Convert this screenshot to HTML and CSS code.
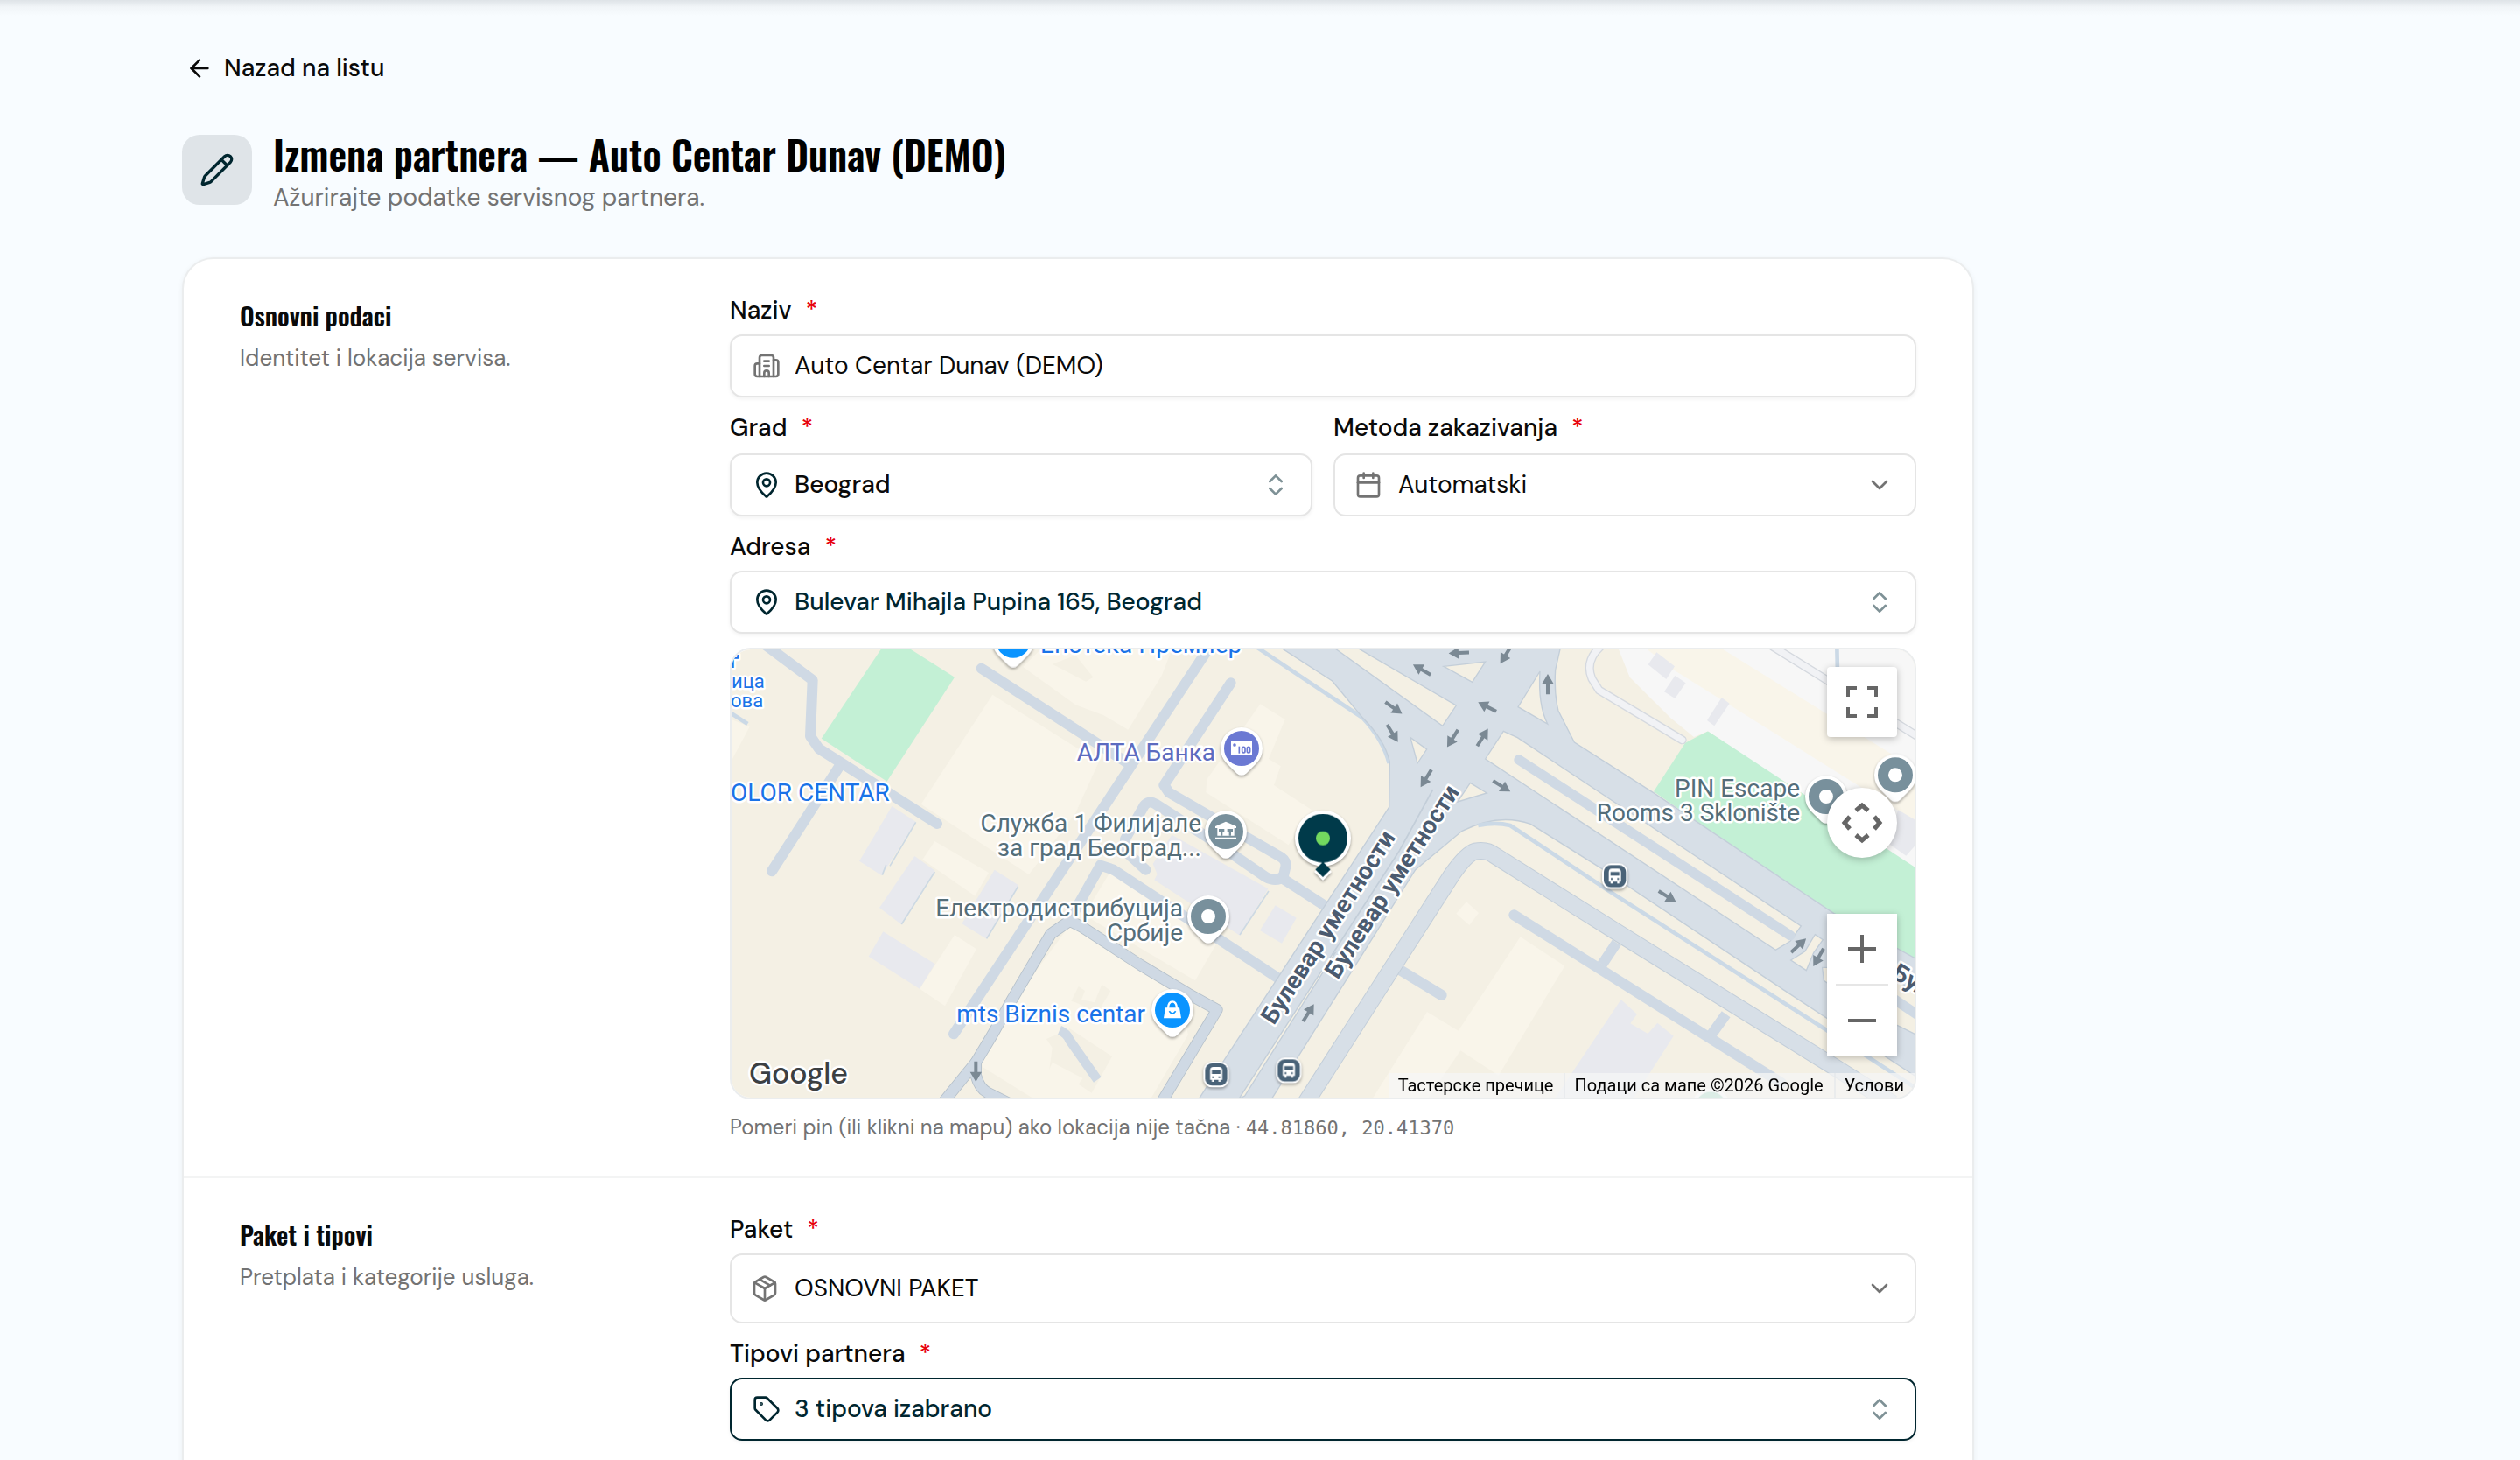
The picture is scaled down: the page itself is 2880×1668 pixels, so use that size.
FILE: index.html
```html
<!DOCTYPE html>
<html lang="sr">
<head>
  <meta charset="utf-8">
  <meta name="viewport" content="width=device-width, initial-scale=1">
  <title>Izmena partnera</title>
  <link rel="stylesheet" href="styles.css">
</head>
<body>
  <main class="page">
    <a class="back" href="#">
      <svg class="icon" viewBox="0 0 24 24" aria-hidden="true"><path d="m12 19-7-7 7-7"/><path d="M19 12H5"/></svg>
      Nazad na listu
    </a>

    <header class="page-head">
      <span class="page-tile">
        <svg class="icon icon-lg" viewBox="0 0 24 24" aria-hidden="true"><path d="M21.174 6.812a1 1 0 0 0-3.986-3.987L3.842 16.174a2 2 0 0 0-.5.83l-1.321 4.352a.5.5 0 0 0 .623.622l4.353-1.32a2 2 0 0 0 .83-.497z"/><path d="m15 5 4 4"/></svg>
      </span>
      <div>
        <h1 class="page-title">Izmena partnera — Auto Centar Dunav (DEMO)</h1>
        <p class="page-subtitle">Ažurirajte podatke servisnog partnera.</p>
      </div>
    </header>

    <form class="card">
      <section class="section">
        <div class="section-info">
          <h2 class="section-title">Osnovni podaci</h2>
          <p class="section-text">Identitet i lokacija servisa.</p>
        </div>
        <div class="fields">
          <div class="field">
            <label class="label" for="naziv">Naziv <span class="required">*</span></label>
            <div class="control">
              <svg class="icon muted" viewBox="0 0 24 24" aria-hidden="true"><path d="M10 12h4"/><path d="M10 8h4"/><path d="M14 21v-3a2 2 0 0 0-4 0v3"/><path d="M6 10H4a2 2 0 0 0-2 2v7a2 2 0 0 0 2 2h16a2 2 0 0 0 2-2V9a2 2 0 0 0-2-2h-2"/><path d="M6 21V5a2 2 0 0 1 2-2h8a2 2 0 0 1 2 2v16"/></svg>
              <input class="value" id="naziv" type="text" value="Auto Centar Dunav (DEMO)">
            </div>
          </div>

          <div class="field-row">
            <div class="field">
              <label class="label" for="grad">Grad <span class="required">*</span></label>
              <button class="control combo" id="grad" type="button">
                <svg class="icon brand" viewBox="0 0 24 24" aria-hidden="true"><path d="M20 10c0 4.993-5.539 10.193-7.399 11.799a1 1 0 0 1-1.202 0C9.539 20.193 4 14.993 4 10a8 8 0 0 1 16 0"/><circle cx="12" cy="10" r="3"/></svg>
                <span class="value">Beograd</span>
                <svg class="icon brand faded" viewBox="0 0 24 24" aria-hidden="true"><path d="m7 15 5 5 5-5"/><path d="m7 9 5-5 5 5"/></svg>
              </button>
            </div>
            <div class="field">
              <label class="label" for="metoda">Metoda zakazivanja <span class="required">*</span></label>
              <div class="control dropdown">
                <svg class="icon muted" viewBox="0 0 24 24" aria-hidden="true"><path d="M8 2v4"/><path d="M16 2v4"/><rect width="18" height="18" x="3" y="4" rx="2"/><path d="M3 10h18"/></svg>
                <select class="value" id="metoda"><option>Automatski</option></select>
                <svg class="icon muted" viewBox="0 0 24 24" aria-hidden="true"><path d="m6 9 6 6 6-6"/></svg>
              </div>
            </div>
          </div>

          <div class="field">
            <label class="label" for="adresa">Adresa <span class="required">*</span></label>
            <button class="control combo brand" id="adresa" type="button">
              <svg class="icon" viewBox="0 0 24 24" aria-hidden="true"><path d="M20 10c0 4.993-5.539 10.193-7.399 11.799a1 1 0 0 1-1.202 0C9.539 20.193 4 14.993 4 10a8 8 0 0 1 16 0"/><circle cx="12" cy="10" r="3"/></svg>
              <span class="value">Bulevar Mihajla Pupina 165, Beograd</span>
              <svg class="icon faded" viewBox="0 0 24 24" aria-hidden="true"><path d="m7 15 5 5 5-5"/><path d="m7 9 5-5 5 5"/></svg>
            </button>
          </div>

          <div class="map">
            <svg class="map-canvas" viewBox="0 0 1352 512" preserveAspectRatio="xMidYMid slice" role="img" aria-label="Mapa lokacije">
              <defs>
                <path id="arrow" d="M0-36 20-2H6V34H-6V-2H-20Z"/>
                <path id="pin" d="M-51 51A72 72 0 1 1 51 51L16 86Q0 99-16 86Z"/>
                <g id="bus">
                  <rect x="-44" y="-44" width="88" height="88" rx="30" fill="#fff"/>
                  <rect x="-38" y="-38" width="76" height="76" rx="24" fill="#4a6378"/>
                  <path fill="#fff" d="M-21-14Q-21-26-10-26H10Q21-26 21-14V18H15V25H8V18H-8V25H-15V18H-21Z"/>
                  <path fill="#4a6378" d="M-15-15H15V-2H-15ZM-14 6h6v6h-6ZM8 6h6v6H8Z"/>
                </g>
              </defs>
              <rect width="1352" height="512" fill="#f4f0e4"/>

              <g transform="scale(.33333)">
                <!-- parks and pale blocks -->
                <g fill="#c3f0d5">
                  <path d="M512 0H615L765 95 533 452 308 305Z"/>
                  <path d="M3348 280 3270 320 3162 487 3780 915 4060 1075V745L3600 440Z"/>
                </g>
                <path fill="#f7f7f7" d="M3042 0 3080 95 3220 235 3300 300 3348 280 4060 748V0Z"/>
                <path fill="#f9f5ea" d="M3140 0H3400L4060 410V590L3230 70Z"/>

                <!-- buildings -->
                <g fill="#f9f5ea">
                  <path d="M895 155 1260 385 1180 560 1020 772 650 530Z"/>
                  <path d="M697 657 882 765 835 845 655 720Z"/>
                  <path d="M765 978 840 1027 732 1222 645 1163Z"/>
                  <path d="M0 240 62 265 0 380Z"/>
                  <path d="M1000 60 1060 0H1510L1475 90 1360 275 1275 225 1180 190Z"/>
                  <path d="M1300 760 1665 1005 1590 1135 1210 910Z"/>
                  <path d="M1160 945 1520 1150 1566 1320 1440 1536H1030L860 1430V1370L980 1190Z"/>
                  <path d="M1813 187 1898 240 1842 375 1883 400 1860 465 1990 550 1910 670 1627 490 1630 445Z"/>
                  <path d="M2705 985 2857 1085 2630 1460 2500 1375 2490 1310Z"/>
                  <path d="M2385 1242 2500 1312V1375L2390 1536H2200Z"/>
                  <path d="M2520 865 2562 903 2530 945 2485 905Z"/>
                </g>
                <g fill="#f4f0e4">
                  <path d="M1190 1155 1212 1170 1200 1200 1245 1210 1270 1148 1300 1170 1255 1245 1180 1210 1165 1205Z"/>
                  <path d="M1160 1300 1305 1395 1235 1520 1190 1490 1205 1470 1100 1415 1090 1440 1100 1365 1080 1335Z"/>
                  <path d="M1180 20 1240 95 1215 110 1100 50Z"/>
                </g>
                <g fill="#e8e9ee">
                  <path d="M550 537 632 590 515 775 438 725Z"/>
                  <path d="M628 708 698 758 583 943 507 885Z"/>
                  <path d="M902 755 984 808 875 992 790 940Z"/>
                  <path d="M520 967 698 1078 645 1163 470 1052Z"/>
                  <path d="M1510 635 1840 820 1743 980 1450 790 1460 770 1445 735Z"/>
                  <path d="M1865 877 1937 920 1887 1007 1812 963Z"/>
                  <path d="M3172 10 3234 58 3205 102 3143 52Z"/>
                  <path d="M3235 90 3272 115 3235 168 3198 145Z"/>
                  <path d="M3395 165 3422 185 3370 262 3345 243Z"/>
                  <path d="M4000 550 4060 585V670L4027 707 3960 660Z"/>
                  <path d="M3050 1200 3105 1250 3082 1282 3142 1317 3175 1280 3230 1325 3095 1536H2825Z"/>
                </g>
                <g fill="none" stroke="#cdd9e3" stroke-width="5">
                  <path d="M632 592 543 742M530 738 517 773M697 762 583 942M983 812 875 991M1842 828 1743 978"/>
                </g>

                <!-- service streets -->
                <g fill="none" stroke="#cfd9e4" stroke-width="36" stroke-linecap="round" stroke-linejoin="round">
                  <path d="M110-20 278 105 270 297 300 340 705 597"/>
                  <path d="M370 400 138 760"/>
                  <path d="M1640-10 762 1318"/>
                  <path d="M857 65 1360 390"/>
                  <path d="M1712 115 1483 465 1500 490 1885 712Q1904 725 1900 745L1893 775Q1870 800 1832 780L1650 655 1455 530Q1430 515 1415 535L1350 650V690L1420 755"/>
                  <path d="M1890 785 2060 895"/>
                  <path d="M1175 900 1265 740 1310 755 1880 1130"/>
                  <path d="M1125 1305Q1150 1315 1160 1340L1255 1475" stroke-width="32" stroke-linecap="butt"/>
                  <path d="M2270 1085 2435 1185"/>
                  <path d="M2683 910 3600 1486"/>
                  <path d="M3035 1005 2985 1080M3410 1250 3360 1320" stroke-linecap="butt"/>
                </g>
                <g fill="none" stroke="#b5c0ca" stroke-width="40" stroke-linejoin="round" stroke-linecap="round">
                  <path d="M720 1560 838 1415 895 1320 965 1195 1095 975 1160 930 1200 950 1400 1080 1566 1180 1665 1235 1470 1560"/>
                  <path d="M838 1415V1460Q850 1505 880 1520L960 1560"/>
                </g>
                <g fill="none" stroke="#cfd9e4" stroke-width="35" stroke-linejoin="round" stroke-linecap="round">
                  <path d="M720 1560 838 1415 895 1320 965 1195 1095 975 1160 930 1200 950 1400 1080 1566 1180 1665 1235 1470 1560"/>
                  <path d="M838 1415V1460Q850 1505 880 1520L960 1560"/>
                </g>
                <g fill="none" stroke="#cbd9e6" stroke-width="14">
                  <path d="M1790-15 2165 235Q2235 310 2255 390"/>
                  <path d="M0 220 55 255"/>
                  <path d="M3790-10 3792 80M2510 490 2532 512"/>
                </g>

                <!-- outer carriageway -->
                <g fill="none" stroke-linejoin="round">
                  <path stroke="#c3ced9" stroke-width="60" d="M1965 1560 2468 775Q2520 700 2550 692 2590 685 2615 705L3030 965 3780 1430 3980 1556"/>
                  <path stroke="#d7dfe7" stroke-width="54" d="M1965 1560 2468 775Q2520 700 2550 692 2590 685 2615 705L3030 965 3780 1430 3980 1556"/>
                </g>

                <!-- boulevards and junction -->
                <path fill="#d7dfe7" stroke="#c3ced9" stroke-width="4" d="M1885-5 2060 108 2165 235Q2240 310 2257 385L2255 540 1590 1560H1840L2345 755 2505 622Q2630 560 2740 598L2985 752 3605 1165 4070 1470V1065L3780 905 3160 490 2890 318 2835 210Q2820 150 2825 70L2842-5Z"/>
                <g fill="#f4f0e4" stroke="#c3ced9" stroke-width="4">
                  <path d="M2070-3H2150L2485 192 2438 262Z"/>
                  <path d="M2442 58 2585 42 2540 112Z"/>
                  <path d="M2772 75 2697 197 2798 255Q2765 190 2772 75Z"/>
                  <path d="M2328 302 2384 342 2352 390Z"/>
                  <path d="M2647 280 2695 302 3667 948 3630 1000 3580 1030 2585 375Z"/>
                  <path d="M2533 457 2590 492 2490 522Z"/>
                  <path d="M3715 977 3742 995 3710 1040 3685 1100 3632 1065 3680 1035Z"/>
                  <path d="M3740 1090 3900 1090 4070 1175V1325L3900 1240 3745 1135Z"/>
                  <path d="M2070 1040 1760 1530 1740 1540 2060 1045Z"/>
                </g>
                <path fill="none" stroke="#c3ced9" stroke-width="5" d="M2405 480 2290 690 2060 1045"/>
                <path fill="none" stroke="#cfd9e4" stroke-width="34" stroke-linecap="round" d="M2700 378 3630 980"/>
                <path stroke="#cfd9e4" stroke-width="34" d="M3980 1195 4070 1255"/>
                <path fill="none" stroke="#cbd9e6" stroke-width="14" d="M2560 603Q2620 590 2670 603L3020 835 3755 1305 4070 1510"/>

                <g fill="none" stroke-linecap="round">
                  <path stroke="#d5d9df" stroke-width="30" d="M2980-10Q2925 40 2950 100L2975 140 3260 310M3570-10 4070 300"/>
                  <path stroke="#f1f2f5" stroke-width="22" d="M2980-10Q2925 40 2950 100L2975 140 3260 310M3570-10 4070 300"/>
                </g>

                <!-- traffic direction -->
                <g fill="#7b8994">
                  <use href="#arrow" transform="translate(2799 120)"/>
                  <use href="#arrow" transform="translate(2495 12) rotate(-92)"/>
                  <use href="#arrow" transform="translate(2655 18) rotate(212)"/>
                  <use href="#arrow" transform="translate(2368 70) rotate(-60)"/>
                  <use href="#arrow" transform="translate(2592 197) rotate(-63)"/>
                  <use href="#arrow" transform="translate(2270 200) rotate(125)"/>
                  <use href="#arrow" transform="translate(2266 287) rotate(148)"/>
                  <use href="#arrow" transform="translate(2473 304) rotate(212)"/>
                  <use href="#arrow" transform="translate(2575 302) rotate(32)"/>
                  <use href="#arrow" transform="translate(2382 441) rotate(212)"/>
                  <use href="#arrow" transform="translate(2640 468) rotate(122)"/>
                  <use href="#arrow" transform="translate(1978 1246) rotate(32)"/>
                  <use href="#arrow" transform="translate(3208 846) rotate(122)"/>
                  <use href="#arrow" transform="translate(3658 1015) rotate(47)"/>
                  <use href="#arrow" transform="translate(3727 1055) rotate(210)"/>
                  <use href="#arrow" transform="translate(838 1446) rotate(180)"/>
                </g>
              </g>

              <!-- place names -->
              <g class="map-street">
                <text transform="translate(620 430) rotate(-57)">Булевар уметности</text>
                <text transform="translate(693 378) rotate(-57)">Булевар уметности</text>
                <text transform="translate(1324 374) rotate(32)">Бул</text>
              </g>
              <g class="map-place place-blue">
                <text x="353" y="4">Енотека Премиер</text>
                <text x="-1" y="173">OLOR CENTAR</text>
                <text x="473" y="426" text-anchor="end">mts Biznis centar</text>
              </g>
              <g class="map-place place-small place-blue">
                <text x="-1" y="21">ґ</text>
                <text x="0" y="44">ица</text>
                <text x="-1" y="66">ова</text>
              </g>
              <text class="map-place place-violet" x="553" y="127" text-anchor="end">АЛТА Банка</text>
              <g class="map-place place-slate" text-anchor="end">
                <text x="537" y="208">Служба 1 Филијале</text>
                <text x="537" y="236">за град Београд...</text>
                <text x="516" y="305">Електродистрибуција</text>
                <text x="516" y="333">Србије</text>
                <text x="1221" y="168">PIN Escape</text>
                <text x="1221" y="196">Rooms 3 Sklonište</text>
              </g>
              <text class="map-logo" x="20" y="496">Google</text>

              <!-- markers -->
              <g transform="scale(.33333)">
                <g class="map-pins" fill="#fff">
                  <use href="#pin" x="966" y="-31"/>
                  <use href="#pin" x="1749" y="339"/>
                  <use href="#pin" x="1695" y="624"/>
                  <use href="#pin" x="1635" y="915"/>
                  <use href="#pin" x="1512" y="1236"/>
                  <use href="#pin" x="3753" y="504"/>
                  <use href="#pin" x="3990" y="430"/>
                </g>
                <circle cx="966" cy="-31" r="60" fill="#0a94ff"/>
                <circle cx="1512" cy="1236" r="60" fill="#0a94ff"/>
                <circle cx="1749" cy="339" r="60" fill="#6b79d3"/>
                <circle cx="1695" cy="624" r="60" fill="#78909c"/>
                <g fill="none" stroke="#78909c" stroke-width="36">
                  <circle cx="1635" cy="915" r="42"/>
                  <circle cx="3753" cy="504" r="42"/>
                  <circle cx="3990" cy="430" r="42"/>
                </g>
                <path fill="#fff" d="M1713 315h72v48h-72z"/>
                <g fill="none" stroke="#6b79d3" stroke-width="5">
                  <circle cx="1725" cy="327" r="3"/>
                  <path d="M1741 332V356"/>
                  <rect x="1751" y="334" width="10" height="20" rx="5"/>
                  <rect x="1768" y="334" width="10" height="20" rx="5"/>
                </g>
                <path fill="#fff" d="M1695 590 1731 606V612H1724V638H1666V612H1659V606ZM1659 644H1731V651H1659Z"/>
                <path fill="#78909c" d="M1671 615H1690V626H1684V638H1677V626H1671ZM1700 615H1719V626H1713V638H1706V626H1700Z"/>
                <path fill="#fff" d="M1488 1228H1536L1542 1264H1482Z"/>
                <path fill="none" stroke="#fff" stroke-width="7" d="M1497 1230Q1498 1207 1512 1207 1526 1207 1527 1230"/>
                <path fill="none" stroke="#0a94ff" stroke-width="5" d="M1501 1240Q1512 1256 1523 1240"/>
                <g class="map-pins">
                  <use href="#bus" x="1662" y="1457"/>
                  <use href="#bus" x="1911" y="1443"/>
                  <use href="#bus" x="3029" y="777"/>
                </g>
                <g class="map-pins">
                  <path fill="#fff" d="M2028 732 2058 762 2028 792 1998 762Z"/>
                  <circle cx="2028" cy="647" r="96" fill="#fff"/>
                </g>
                <circle cx="2028" cy="647" r="84" fill="#003a4a"/>
                <path fill="#003a4a" d="M2028 728 2054 754 2028 780 2002 754Z"/>
                <circle cx="2028" cy="647" r="24" fill="#73d85f"/>
                <circle cx="3358" cy="1570" r="60" fill="#8ed1b8" stroke="#fff" stroke-width="12"/>
              </g>
            </svg>

            <button class="map-button map-fullscreen" type="button" aria-label="Ceo ekran">
              <svg viewBox="0 0 18 18" width="36" height="36" aria-hidden="true"><path d="M0 0v6h2V2h4V0H0zm16 0h-4v2h4v4h2V0h-2zm0 16h-4v2h6v-6h-2v4zM2 12H0v6h6v-2H2v-4z"/></svg>
            </button>
            <button class="map-button map-camera" type="button" aria-label="Kontrole kamere">
              <svg viewBox="0 0 48 48" width="48" height="48" aria-hidden="true"><g fill="none" stroke="#666" stroke-width="5"><path d="m17 10 7-6 7 6M17 38l7 6 7-6M10 17l-6 7 6 7M38 17l6 7-6 7"/></g></svg>
            </button>
            <div class="map-zoom">
              <button type="button" aria-label="Uvećaj"><svg viewBox="0 0 34 34" width="34" height="34" aria-hidden="true"><path d="M15 1h4v14h14v4H19v14h-4V19H1v-4h14z"/></svg></button>
              <button type="button" aria-label="Umanji"><svg viewBox="0 0 34 34" width="34" height="34" aria-hidden="true"><path d="M1 15h32v4H1z"/></svg></button>
            </div>
            <div class="map-legal">
              <a href="#">Тастерске пречице</a>
              <span>Подаци са мапе ©2026 Google</span>
              <a href="#">Услови</a>
            </div>
          </div>
          <p class="hint">Pomeri pin (ili klikni na mapu) ako lokacija nije tačna · <span class="coords">44.81860, 20.41370</span></p>
        </div>
      </section>

      <section class="section">
        <div class="section-info">
          <h2 class="section-title">Paket i tipovi</h2>
          <p class="section-text">Pretplata i kategorije usluga.</p>
        </div>
        <div class="fields">
          <div class="field">
            <label class="label" for="paket">Paket <span class="required">*</span></label>
            <div class="control dropdown tall">
              <svg class="icon muted" viewBox="0 0 24 24" aria-hidden="true"><path d="M11 21.73a2 2 0 0 0 2 0l7-4A2 2 0 0 0 21 16V8a2 2 0 0 0-1-1.73l-7-4a2 2 0 0 0-2 0l-7 4A2 2 0 0 0 3 8v8a2 2 0 0 0 1 1.73z"/><path d="M12 22V12"/><path d="M3.29 7 12 12l8.71-5"/><path d="m7.5 4.27 9 5.15"/></svg>
              <select class="value" id="paket"><option>OSNOVNI PAKET</option></select>
              <svg class="icon muted" viewBox="0 0 24 24" aria-hidden="true"><path d="m6 9 6 6 6-6"/></svg>
            </div>
          </div>
          <div class="field">
            <label class="label" for="tipovi">Tipovi partnera <span class="required">*</span></label>
            <button class="control combo brand active" id="tipovi" type="button">
              <svg class="icon" viewBox="0 0 24 24" aria-hidden="true"><path d="M12.586 2.586A2 2 0 0 0 11.172 2H4a2 2 0 0 0-2 2v7.172a2 2 0 0 0 .586 1.414l8.704 8.704a2.426 2.426 0 0 0 3.42 0l6.58-6.58a2.426 2.426 0 0 0 0-3.42z"/><circle cx="7.5" cy="7.5" r=".5" fill="currentColor"/></svg>
              <span class="value">3 tipova izabrano</span>
              <svg class="icon faded" viewBox="0 0 24 24" aria-hidden="true"><path d="m7 15 5 5 5-5"/><path d="m7 9 5-5 5 5"/></svg>
            </button>
          </div>
        </div>
      </section>
    </form>
  </main>
</body>
</html>
```
FILE: styles.css
```css
*,
*::before,
*::after {
  box-sizing: border-box;
}

body {
  margin: 0;
  min-height: 100vh;
  background: linear-gradient(#dee3e7, #f1f5f8 8px, #f8fcff 18px) no-repeat #f8fcff;
  color: #0a0a0a;
  font-family: "DM Sans", Inter, sans-serif;
  font-size: 28px;
  line-height: 38px;
}

h1,
h2,
p {
  margin: 0;
}

button,
input,
select {
  margin: 0;
  color: inherit;
  font: inherit;
}

.page {
  padding: 50px 208px 0;
}

.icon {
  flex: none;
  width: 32px;
  height: 32px;
  fill: none;
  stroke: currentColor;
  stroke-width: 2;
  stroke-linecap: round;
  stroke-linejoin: round;
}

.icon-lg {
  width: 40px;
  height: 40px;
}

.muted {
  color: #737373;
}

.brand {
  color: #00262f;
}

.faded {
  opacity: .5;
}

/* Page heading */

.back {
  display: inline-flex;
  align-items: center;
  gap: 12px;
  height: 56px;
  padding: 0 4px;
  color: #0a0a0a;
  font-weight: 500;
  text-decoration: none;
}

.page-head {
  display: flex;
  align-items: flex-start;
  gap: 24px;
  margin: 42px 0 46px;
}

.page-tile {
  display: flex;
  align-items: center;
  justify-content: center;
  width: 80px;
  height: 80px;
  margin-top: 6px;
  border-radius: 20px;
  background: #dfe4e8;
  color: #00262f;
}

.page-title {
  color: #000;
  font-family: Oswald, "Roboto Condensed", "Open Sans Condensed", sans-serif;
  font-size: 45px;
  font-weight: 600;
  line-height: 56px;
}

.page-subtitle {
  color: #737373;
  line-height: 44px;
}

/* Form card */

.card {
  max-width: 2048px;
  padding-bottom: 40px;
  border: 2px solid #ebedee;
  border-radius: 36px;
  background: #fff;
  box-shadow: 0 2px 6px rgba(0, 0, 0, .06);
}

.section {
  display: grid;
  grid-template-columns: 480px minmax(0, 1fr);
  gap: 80px;
  padding: 40px 64px;
}

.section + .section {
  border-top: 2px solid #f3f4f4;
}

.section-title {
  padding-top: 4px;
  font-family: Oswald, "Roboto Condensed", "Open Sans Condensed", sans-serif;
  font-size: 29px;
  font-weight: 600;
  line-height: 40px;
}

.section-text {
  padding-top: 10px;
  color: #737373;
  font-size: 26px;
}

.fields {
  display: flex;
  flex-direction: column;
  gap: 16px;
}

.field {
  display: flex;
  flex-direction: column;
  gap: 8px;
}

.field-row {
  display: grid;
  grid-template-columns: 1fr 1fr;
  gap: 24px;
}

.field-row .field {
  gap: 10px;
}

.label {
  display: flex;
  gap: 16px;
  font-weight: 500;
}

.required {
  color: #e7000b;
}

.control {
  display: flex;
  align-items: center;
  gap: 16px;
  width: 100%;
  height: 72px;
  padding: 0 24px;
  border: 2px solid #e5e5e5;
  border-radius: 14px;
  background: #fff;
  box-shadow: 0 2px 4px rgba(0, 0, 0, .05);
}

.combo {
  font-weight: 500;
  text-align: left;
}

.dropdown {
  gap: 18px;
  padding-left: 22px;
  box-shadow: none;
}

.tall {
  height: 80px;
}

.active {
  border-color: #00262f;
}

.value {
  flex: 1;
  min-width: 0;
  padding: 0;
  border: 0;
  outline: 0;
  background: none;
  appearance: none;
}

.hint {
  color: #737373;
  font-size: 24px;
  line-height: 32px;
}

.coords {
  font-family: "DejaVu Sans Mono", monospace;
  font-size: 22px;
  line-height: 1;
}

/* Map */

.map {
  position: relative;
  height: 516px;
  overflow: hidden;
  border: 2px solid #ebedee;
  border-radius: 24px;
  font-family: Roboto, sans-serif;
}

.map-canvas {
  display: block;
  width: 100%;
  height: 100%;
}

.map-canvas text {
  stroke: #fff;
  stroke-width: 5px;
  stroke-linejoin: round;
  paint-order: stroke;
}

.map-place {
  font-size: 28px;
}

.place-small {
  font-size: 22px;
}

.place-blue {
  fill: #1a73e8;
}

.place-violet {
  fill: #5c6bc0;
}

.place-slate {
  fill: #546e7a;
}

.map-street {
  fill: #4b5b70;
  font-size: 28px;
  font-weight: 700;
}

.map-logo {
  fill: #3c4043;
  font-family: "DM Sans", Lato, sans-serif;
  font-size: 34px;
  font-weight: 500;
}

.map-pins {
  filter: drop-shadow(0 5px 4px rgba(0, 0, 0, .35));
}

.map-button,
.map-zoom {
  position: absolute;
  right: 20px;
  width: 80px;
  background: #fff;
  box-shadow: 0 2px 8px rgba(0, 0, 0, .25);
}

.map-button,
.map-zoom button {
  display: flex;
  align-items: center;
  justify-content: center;
  height: 80px;
  padding: 0;
  border: 0;
  fill: #666;
}

.map-fullscreen {
  top: 20px;
  border-radius: 4px;
}

.map-camera {
  top: 158px;
  border-radius: 50%;
}

.map-zoom {
  bottom: 48px;
}

.map-zoom button {
  width: 100%;
  background: none;
}

.map-zoom button + button::before {
  content: "";
  position: absolute;
  top: 80px;
  left: 10px;
  width: 60px;
  height: 2px;
  background: #e6e6e6;
}

.map-zoom button + button {
  margin-top: 2px;
}

.map-legal {
  position: absolute;
  right: 0;
  bottom: 0;
  display: flex;
  height: 28px;
  font-size: 20px;
  line-height: 28px;
}

.map-legal > * {
  padding: 0 12px 0 10px;
  background: rgba(245, 245, 245, .75);
  color: #000;
  text-decoration: none;
}

.map-legal > * + * {
  border-left: 2px solid rgba(225, 228, 232, .6);
}
```
